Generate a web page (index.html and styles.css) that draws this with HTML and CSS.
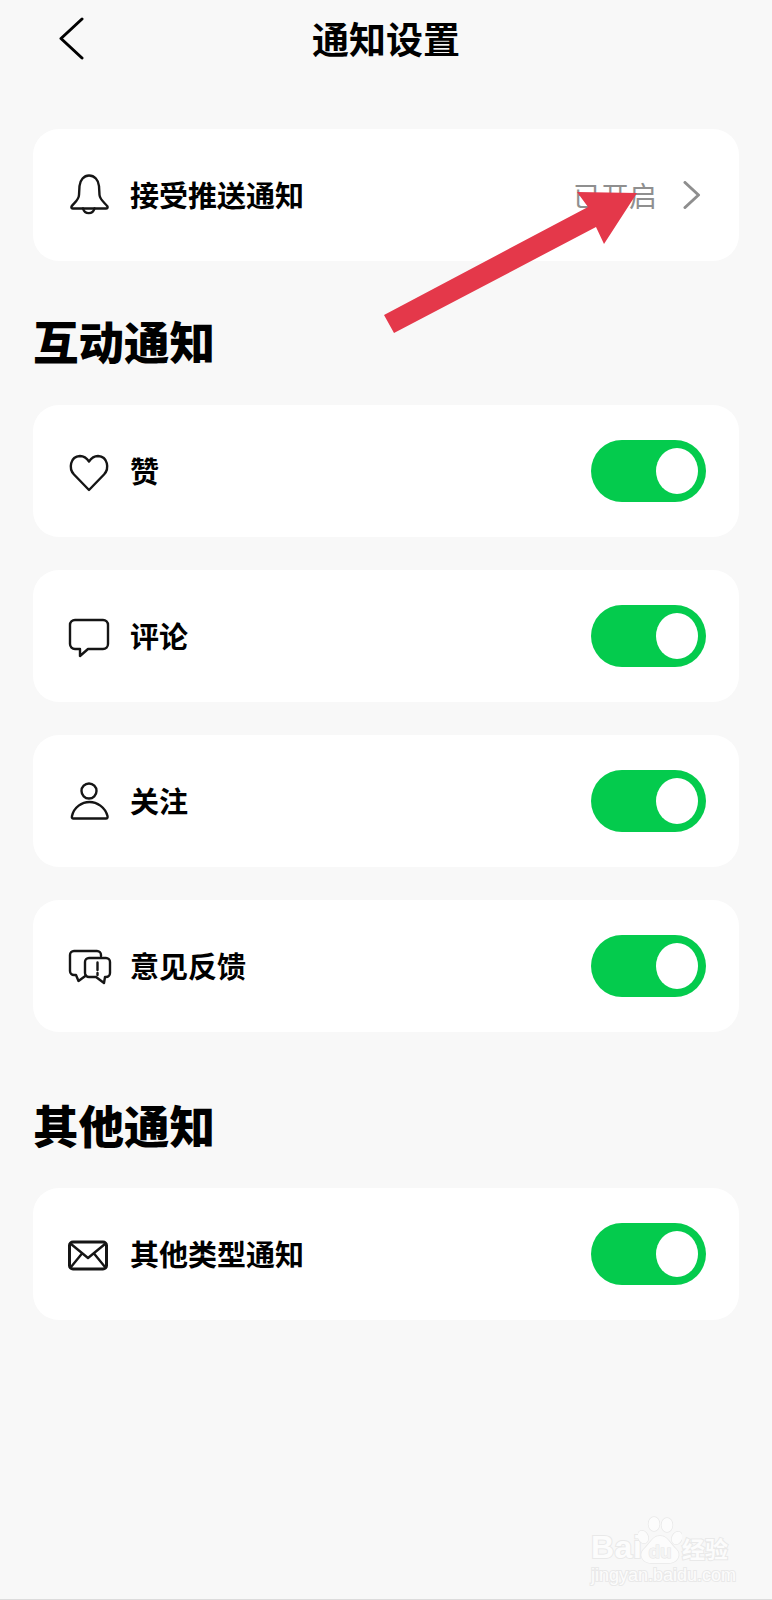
FILE: index.html
```html
<!DOCTYPE html>
<html lang="zh-CN">
<head>
<meta charset="utf-8">
<title>通知设置</title>
<link rel="stylesheet" href="styles.css">
</head>
<body>
<div class="page">
  <header class="topbar">
    <button class="back" aria-label="返回">
      <svg width="26" height="44" viewBox="0 0 26 44"><path class="line" d="M24 2 L3 21.5 L24 41"/></svg>
    </button>
    <h1 class="title">通知设置</h1>
  </header>

  <div class="card">
    <svg class="icon" viewBox="0 0 40 48"><path class="line-thin" d="M20 4.5C15 4.5 11 9 10.5 15L10 24C9.8 29 5 32 2.5 35.5Q2 37.5 4 37.5H37Q39 37.5 38.5 35.5C36 32 31 29 30.5 24L30 15C29.5 9 25.5 4.5 20 4.5Z"/><path class="line-thin" d="M14 37.5a6 6.5 0 0 0 11.5 0"/></svg>
    <span class="label">接受推送通知</span>
    <span class="status">已开启</span>
    <svg class="chevron" width="18" height="28" viewBox="0 0 18 28"><path d="M2 1.5 L15.5 14 L2 26.5"/></svg>
  </div>

  <h2 class="heading heading-first">互动通知</h2>
  <div class="stack">
    <div class="card">
      <svg class="icon" viewBox="0 0 40 48"><path class="line-thin" d="M20 43L5 27.5C-0.5 21.5 1 9.5 11 9C15 9 18 11.5 20 14.5C22 11.5 25 9 29 9C39 9.5 40.5 21.5 35 27.5Z"/></svg>
      <span class="label">赞</span>
      <span class="toggle"><span class="knob"></span></span>
    </div>
    <div class="card">
      <svg class="icon" viewBox="0 0 40 48"><path class="line-thin" d="M6 8H34a5 5 0 0 1 5 5V32a5 5 0 0 1-5 5H19L11 44V37H6a5 5 0 0 1-5-5V13a5 5 0 0 1 5-5Z"/></svg>
      <span class="label">评论</span>
      <span class="toggle"><span class="knob"></span></span>
    </div>
    <div class="card">
      <svg class="icon" viewBox="0 0 40 48"><circle class="line-thin" cx="20" cy="14" r="7.5"/><path class="line-thin" d="M4 41.5H37Q39 41.5 38.5 39C36 30 28 25 20.5 25C13 25 5 30 3 39Q2.5 41.5 4 41.5Z"/></svg>
      <span class="label">关注</span>
      <span class="toggle"><span class="knob"></span></span>
    </div>
    <div class="card">
      <svg class="icon" viewBox="0 0 40 48"><path class="line-thin" d="M32 14V13a4 4 0 0 0-4-4H5a4 4 0 0 0-4 4V29a4 4 0 0 0 4 4H7L9.5 39L17 33.5"/><path class="line-thin" d="M20 16H37a4 4 0 0 1 4 4V31a4 4 0 0 1-4 4H36L35 41L27 35H20a4 4 0 0 1-4-4V20a4 4 0 0 1 4-4Z"/><path class="line-thin" d="M28.5 20.5V28M28.5 31V33"/></svg>
      <span class="label">意见反馈</span>
      <span class="toggle"><span class="knob"></span></span>
    </div>
  </div>

  <h2 class="heading heading-second">其他通知</h2>
  <div class="card">
    <svg class="icon" viewBox="0 0 40 48"><rect class="line-mid" x="0.5" y="12" width="37" height="27" rx="3.5"/><path class="line-thin" d="M2 14L19 28L36 14M2 37L13 23.5M36 37L25 23.5"/></svg>
    <span class="label">其他类型通知</span>
    <span class="toggle"><span class="knob"></span></span>
  </div>

  <svg class="arrow" width="772" height="360" viewBox="0 0 772 360"><polygon points="384,315 588,207 577,192 637,193 604,244 596,227 394,333"/></svg>

  <div class="watermark">
    <div class="wm-top">
      <span class="wm-baidu">Bai</span>
      <svg class="wm-paw" width="44" height="48" viewBox="0 0 44 48">
        <ellipse cx="5" cy="21" rx="5" ry="6.5" transform="rotate(-25 5 21)"/>
        <ellipse cx="16" cy="8" rx="5.5" ry="7"/>
        <ellipse cx="29" cy="9" rx="5.5" ry="7"/>
        <ellipse cx="39" cy="22" rx="5" ry="6.5" transform="rotate(25 39 22)"/>
        <path d="M22 20C14 20 12 28 6 33C0 39 5 47 13 47H31C39 47 44 39 38 33C32 28 30 20 22 20Z"/>
        <text x="22" y="42" text-anchor="middle">du</text>
      </svg>
      <span class="wm-cn">经验</span>
    </div>
    <div class="wm-url">jingyan.baidu.com</div>
  </div>
</div>
</body>
</html>
```
FILE: styles.css
```css
* { box-sizing: border-box; }
html, body { margin: 0; padding: 0; }
body {
  background: #f8f8f8;
  font-family: "Noto Sans CJK SC", "Noto Sans", sans-serif;
  color: #000;
}
.page {
  position: relative;
  width: 772px;
  height: 1600px;
  padding: 0 33px;
  border-bottom: 1px solid #dcdcdc;
  overflow: hidden;
}
.topbar {
  display: flex;
  align-items: center;
  justify-content: center;
  position: relative;
  height: 80px;
  padding-bottom: 4px;
  margin-bottom: 49px;
}
.back {
  position: absolute;
  left: 25px;
  top: 17px;
  padding: 0;
  border: 0;
  background: none;
  display: flex;
}
.title {
  margin: 0;
  font-size: 37px;
  line-height: 50px;
  font-weight: 700;
}
.line { fill: none; stroke: #000; stroke-width: 3; stroke-linecap: round; stroke-linejoin: round; }
.line-thin { fill: none; stroke: #151515; stroke-width: 2.4; stroke-linecap: round; stroke-linejoin: round; }
.line-mid { fill: none; stroke: #151515; stroke-width: 3; }
.card {
  display: flex;
  align-items: center;
  height: 132px;
  padding: 0 33px 0 36px;
  background: #fff;
  border-radius: 26px;
}
.icon {
  flex: none;
  width: 40px;
  height: 48px;
  margin-right: 21px;
  overflow: visible;
}
.label {
  flex: 1;
  font-size: 29px;
  line-height: 40px;
  padding-bottom: 2px;
  font-weight: 700;
}
.status {
  font-size: 28px;
  line-height: 40px;
  color: #8f8f8f;
  margin-right: 26px;
}
.chevron { flex: none; margin-right: 5px; }
.chevron path { fill: none; stroke: #8e8e8e; stroke-width: 3; stroke-linecap: round; stroke-linejoin: round; }
.heading {
  margin: 0;
  font-size: 45.5px;
  line-height: 60px;
  font-weight: 900;
}
.heading-first { margin-top: 49px; margin-bottom: 35px; }
.heading-second { margin-top: 62px; margin-bottom: 34px; }
.stack { display: flex; flex-direction: column; gap: 33px; }
.toggle {
  flex: none;
  display: flex;
  align-items: center;
  justify-content: flex-end;
  width: 115px;
  height: 62px;
  padding-right: 8px;
  background: #04cb4d;
  border-radius: 31px;
}
.knob {
  width: 42px;
  height: 46px;
  background: #fff;
  border-radius: 50%;
}
.arrow {
  position: absolute;
  left: 0;
  top: 0;
  pointer-events: none;
}
.arrow polygon { fill: #e4384a; }
.watermark {
  position: absolute;
  left: 591px;
  top: 1516px;
  width: 142px;
  color: #fcfcfc;
  font-family: "Liberation Sans", sans-serif;
  -webkit-text-stroke: 2px #e9e9e9;
  paint-order: stroke fill;
}
.wm-top { display: flex; align-items: flex-end; height: 48px; }
.wm-baidu { font-size: 32px; line-height: 34px; font-weight: 700; width: 47px; letter-spacing: 0.5px; }
.wm-paw { flex: none; }
.wm-paw ellipse, .wm-paw path { fill: #fcfcfc; stroke: #e8e8e8; stroke-width: 1.4; }
.wm-paw text { font: 700 19px "Liberation Sans", sans-serif; fill: #f4f4f4; stroke: #e6e6e6; stroke-width: 1; }
.wm-cn { font-family: "Noto Sans CJK SC", sans-serif; font-size: 23px; line-height: 32px; font-weight: 700; white-space: nowrap; }
.wm-url { font-size: 18px; line-height: 20px; margin-top: 1px; white-space: nowrap; }
```
